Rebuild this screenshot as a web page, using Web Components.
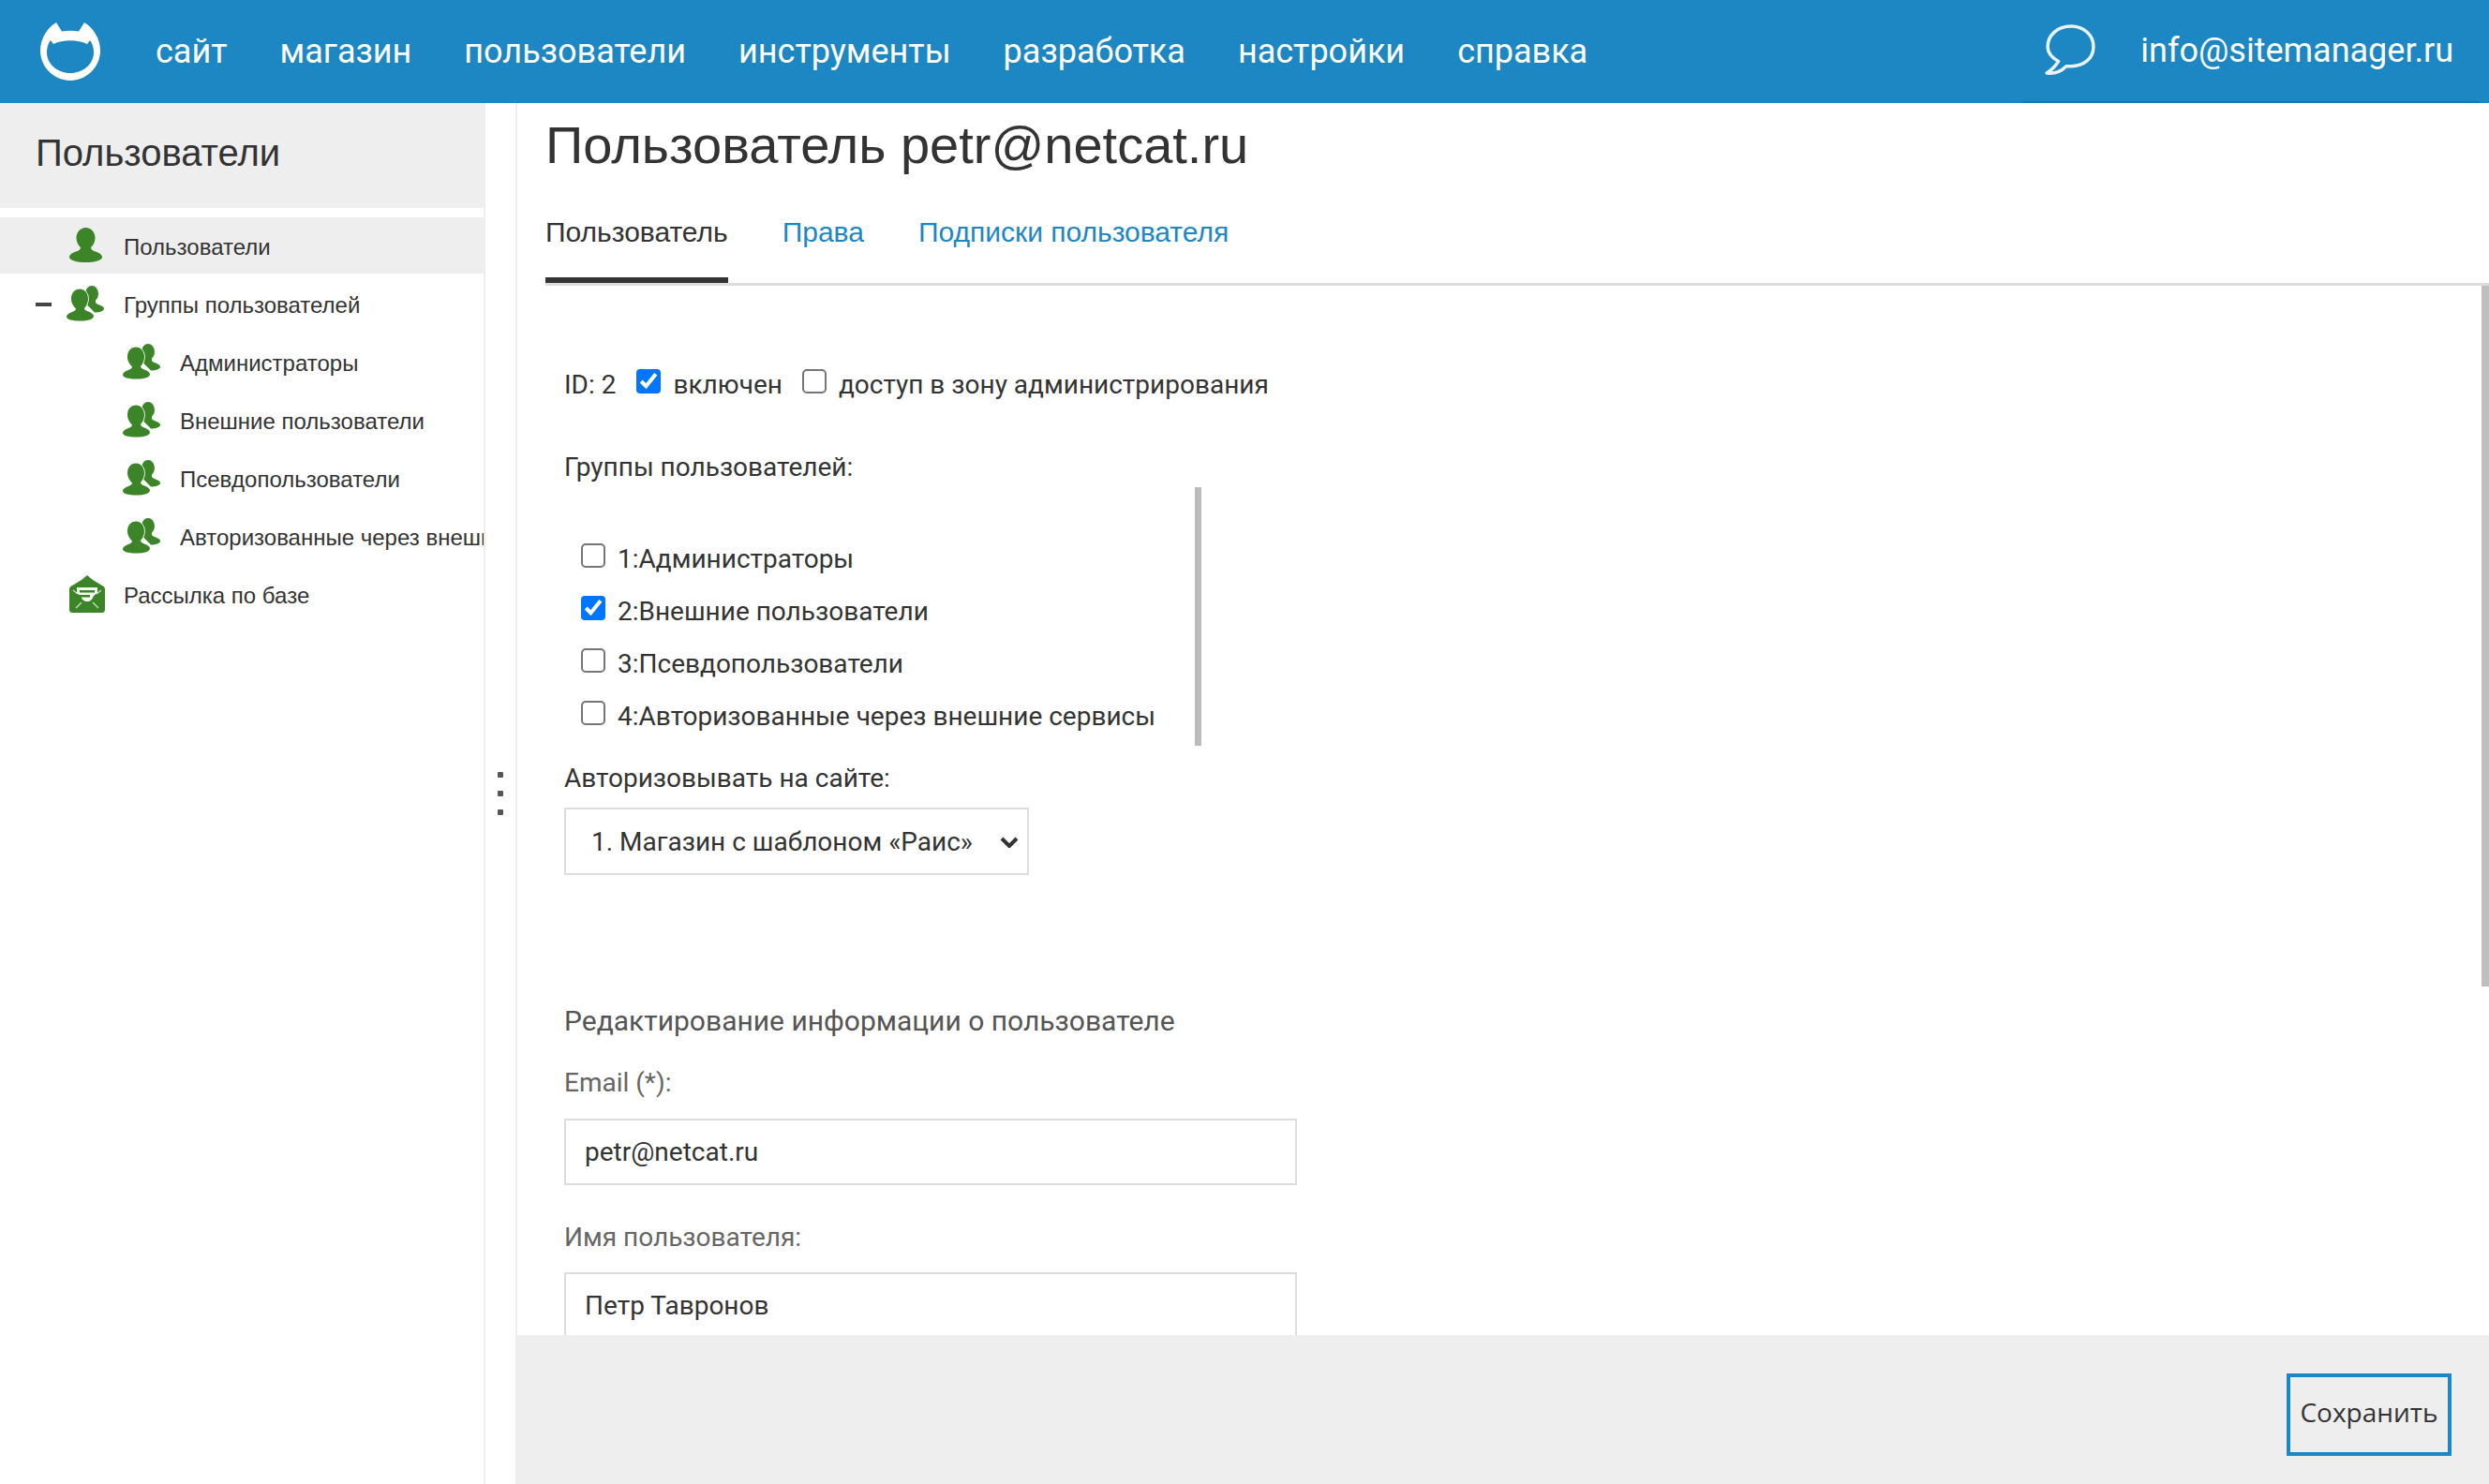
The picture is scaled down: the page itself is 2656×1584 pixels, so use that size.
<!DOCTYPE html>
<html lang="ru"><head><meta charset="utf-8"><title>Пользователи</title>
<style>
html,body{margin:0;height:100%;overflow:hidden;background:#fff}
body{display:flex;flex-direction:column;font-family:Roboto,"Liberation Sans",sans-serif;color:#333}
</style></head><body>
<app-header></app-header>
<app-layout>
  <app-sidebar slot="side" title-text="Пользователи">
    <tree-item icon="user" active>Пользователи</tree-item>
    <tree-item icon="group" minus>Группы пользователей</tree-item>
    <tree-item icon="group" child>Администраторы</tree-item>
    <tree-item icon="group" child>Внешние пользователи</tree-item>
    <tree-item icon="group" child>Псевдопользователи</tree-item>
    <tree-item icon="group" child>Авторизованные через внешние сервисы</tree-item>
    <tree-item icon="mail">Рассылка по базе</tree-item>
  </app-sidebar>
  <user-page slot="main"></user-page>
</app-layout>
<script>
const G="#3b8427";
const ICONS={
 user:`<svg width="35" height="38" viewBox="0 0 35 38"><path fill="${G}" d="M17.500 0c6 0 10 5 10 11 0 4-2 8-4.500 10 0 2 1.500 3.500 5 4.500 4 1.300 7 3.500 7 6 0 3.500-8 5.500-17.500 5.500S0 35 0 31.500c0-2.500 3-4.700 7-6 3.500-1 5-2.500 5-4.500C9.500 19 7.500 15 7.500 11 7.500 5 11.500 0 17.500 0z"/></svg>`,
 group:`<svg width="40" height="39" viewBox="0 0 40 39"><g fill="${G}"><ellipse cx="27" cy="8.500" rx="7" ry="8.500"/><path d="M23 12h8v6c1 1.500 3 2 5 3 2.500 1 4 2 4 3.500 0 2.500-5 4-10 4l-8-8z"/><path stroke="#fff" stroke-width="1.600" paint-order="stroke" d="M14 3.500c5.500 0 9 4.500 9 10.500 0 4-1.700 7.500-4 10 0 1.500 1.500 2.500 4 3.500 3.500 1.300 6 3 6 5 0 3-6 5-14.500 5S0 36 0 33c0-2 2.500-3.700 6-5 2.500-1 4-2 4-3.500-2.300-2.500-5-6-5-10.500C5 8 8.500 3.500 14 3.500z"/></g></svg>`,
 mail:`<svg width="38" height="40" viewBox="0 0 38 40"><path fill="${G}" d="M19 0l6 5 10 6c2 1 3 2 3 4v21c0 3-1 4-4 4H4c-3 0-4-1-4-4V15c0-2 1-3 3-4l10-6z"/><path fill="#f4f8f2" d="M8 13h22v6l-4 3-2 4-3 2h-4l-3-2-2-4-4-3z"/><path fill="${G}" d="M11 16h16v2.500H11zM11 21h11v2.500H11z"/><path stroke="#cfe2c8" stroke-width="1.300" fill="none" d="M4 16l5 4M34 16l-5 4M7 35l6-6M31 35l-6-6"/></svg>`
};
function el(name,html){
 customElements.define(name,class extends HTMLElement{
  connectedCallback(){ if(this.shadowRoot) return; const s=this.attachShadow({mode:"open"}); s.innerHTML=typeof html==="function"?html(this):html; }
 });
}
el("nav-link",`<style>:host{display:block;font-size:36px;line-height:110px;color:#fff;white-space:nowrap}</style><slot></slot>`);
el("app-header",`<style>
:host{display:flex;flex:none;height:110px;background:#1c87c3;align-items:stretch}
.logo{width:166px;flex:none;display:flex;align-items:flex-start}
.logo svg{margin:24px 0 0 43px}
nav{display:flex;gap:56px;flex:1}
.right{display:flex;align-items:center;margin-right:10px;padding:0 28px 0 24px;box-sizing:border-box;border-bottom:2px solid #1b76a9;gap:48px}
.right nav-link{line-height:112px}
.right svg{display:block;margin-top:-2px}
</style>
<div class="logo"><svg width="64" height="62" viewBox="0 0 64 62"><path fill="#fff" fill-rule="evenodd" d="M17 0l6 9.500C29 8.500 35 8.500 41 9.500L47 0c9 5 17 17 17 30 0 18-15 32-32 32S0 48 0 30C0 17 8 5 17 0zM14 23C24 18 40 18 50 23L53 19C56 23 57 27 57 32 57 44 46 54 32 54S7 44 7 32C7 27 8 23 11 19z"/></svg></div>
<nav><nav-link>сайт</nav-link><nav-link>магазин</nav-link><nav-link>пользователи</nav-link><nav-link>инструменты</nav-link><nav-link>разработка</nav-link><nav-link>настройки</nav-link><nav-link>справка</nav-link></nav>
<div class="right"><svg width="54" height="54" viewBox="0 0 52 52"><path fill="none" stroke="#fff" stroke-opacity=".9" stroke-width="3.400" stroke-linejoin="round" d="M14 38C7 34 3 29 3 23 3 11 13 2 27 2 40 2 50 11 50 23 50 35 40 43 27 43L22 43C17 48 10 51 2 50 7 47 11 43 14 38Z"/></svg><nav-link>info@sitemanager.ru</nav-link></div>`);
el("app-layout",`<style>
:host{display:flex;flex:1;min-height:0}
.split{width:36px;flex:none;border-left:2px solid #eee;border-right:2px solid #eee;display:flex;flex-direction:column;align-items:center;gap:14px;padding-top:714px;box-sizing:border-box}
.split i{display:block;width:6px;height:6px;background:#555;border-radius:1px}
</style><slot name="side"></slot><div class="split"><i></i><i></i><i></i></div><slot name="main"></slot>`);
el("app-sidebar",h=>`<style>
:host{display:block;width:516px;flex:none;overflow:hidden}
h2{margin:0 0 10px;height:112px;background:#eee;font:400 40px/106px "Liberation Sans",Arial,sans-serif;padding-left:38px;color:#333}
</style><h2>${h.getAttribute("title-text")}</h2><slot></slot>`);
el("tree-item",h=>{
 const child=h.hasAttribute("child"),icon=h.getAttribute("icon");
 const pad=child?131:74;
 const col=child?61:58;
 const ml=(!child&&icon==="group")?-3:0;
 return `<style>
:host{display:flex;height:60px;margin-bottom:2px;align-items:center;white-space:nowrap;font:24px "Liberation Sans",Arial,sans-serif;color:#333;position:relative;width:516px;overflow:hidden;padding-left:${pad}px;box-sizing:border-box;${h.hasAttribute("active")?"background:#eee;":""}}
.ic{width:${col}px;flex:none;display:flex;height:42px;align-items:center}
.ic svg{display:block;margin-left:${ml}px}
.t{padding-top:4px}
.m{position:absolute;left:38px;top:29px;width:17px;height:4px;background:#444}
</style>${h.hasAttribute("minus")?'<i class="m"></i>':""}<span class="ic">${ICONS[icon]}</span><span class="t"><slot></slot></span>`});
el("check-row",h=>`<style>
:host{display:flex;align-items:center;height:56px;font-size:28px;white-space:nowrap;color:#333}
input{zoom:2;width:13px;height:13px;margin:0 6.500px 0 0;flex:none;position:relative;top:-1px}
.t{padding-top:3px}
</style><input type="checkbox" ${h.hasAttribute("checked")?"checked":""}><span class="t"><slot></slot></span>`);
el("text-field",h=>`<style>
:host{display:block}
label{display:block;font-size:28px;line-height:42px;height:40px;color:#666}
.box{margin-top:${h.getAttribute("gap")||19}px;width:782px;height:71px;border:2px solid #ddd;box-sizing:border-box;font-size:28px;line-height:67px;padding-left:20px;color:#333;background:#fff}
</style><label>${h.getAttribute("label")}</label><div class="box"><slot></slot></div>`);
el("user-page",`<style>
:host{display:flex;flex-direction:column;flex:1;min-width:0;position:relative;overflow:hidden}
.scroll{flex:1;min-height:0;overflow:hidden;padding-left:30px}
h1{margin:0;font:400 56px/90px "Liberation Sans",Arial,sans-serif;color:#333}
.tabs{display:flex;gap:58px;height:105px;border-bottom:3px solid #ddd;box-sizing:border-box;font:30px "Liberation Sans",Arial,sans-serif}
.tabs a{display:block;color:#1c87c3;line-height:46px;padding-top:25px;box-sizing:border-box}
.tabs a.on{color:#333;border-bottom:6px solid #333;height:102px}
form{padding:0 0 0 20px}
.line{display:flex;align-items:center;height:52px;margin-top:78px;font-size:28px;white-space:nowrap}
.line span{margin-right:22px;padding-top:3px}
.line check-row{margin-right:21px}
.lbl{font-size:28px;line-height:42px;height:40px;color:#333}
.groups{position:relative;width:680px;height:276px;padding:47px 0 0 18px;box-sizing:border-box;margin-top:2px}
.bar{position:absolute;right:0;top:0;width:7px;height:276px;background:#bbb}
.sel{position:relative;width:496px;margin-top:12px}
select{zoom:2;display:block;appearance:none;-webkit-appearance:none;width:248px;height:36px;margin:0;border:1px solid #ddd;border-radius:0;background:#fff;font:14px Roboto,sans-serif;color:#333;padding:0 0 0 13.500px}
.sel svg{position:absolute;right:11px;top:31px}
h3{margin:135px 0 0;font:400 30px/42px Roboto,sans-serif;height:40px;color:#555}
.page-bar{position:absolute;right:0;top:195px;width:8px;height:748px;background:#bfbfbf}
</style>
<div class="scroll">
<h1>Пользователь petr@netcat.ru</h1>
<div class="tabs"><a class="on">Пользователь</a><a>Права</a><a>Подписки пользователя</a></div>
<form>
<div class="line"><span>ID: 2</span><check-row checked>включен</check-row><check-row>доступ в зону администрирования</check-row></div>
<div class="lbl" style="margin-top:43px">Группы пользователей:</div>
<div class="groups"><i class="bar"></i>
<check-row>1:Администраторы</check-row><check-row checked>2:Внешние пользователи</check-row><check-row>3:Псевдопользователи</check-row><check-row>4:Авторизованные через внешние сервисы</check-row></div>
<div class="lbl" style="margin-top:14px">Авторизовывать на сайте:</div>
<div class="sel"><select><option>1. Магазин с шаблоном «Раис»</option></select><svg width="20" height="12" viewBox="0 0 20 12"><path d="M2 2l8 8 8-8" fill="none" stroke="#333" stroke-width="4"/></svg></div>
<h3>Редактирование информации о пользователе</h3>
<text-field label="Email (*):" style="margin-top:26px">petr@netcat.ru</text-field>
<text-field label="Имя пользователя:" gap="18" style="margin-top:35px">Петр Тавронов</text-field>
</form>
</div>
<i class="page-bar"></i>
<save-bar></save-bar>`);
el("save-bar",`<style>
:host{display:flex;flex:none;height:159px;background:#eee;justify-content:flex-end;align-items:flex-start}
button{margin:41px 40px 0 0;width:176px;height:88px;border:4px solid #1b87c3;background:transparent;font:28px "Open Sans",sans-serif;color:#333;padding:0 0 7px}
</style><button>Сохранить</button>`);
</script>
</body></html>
